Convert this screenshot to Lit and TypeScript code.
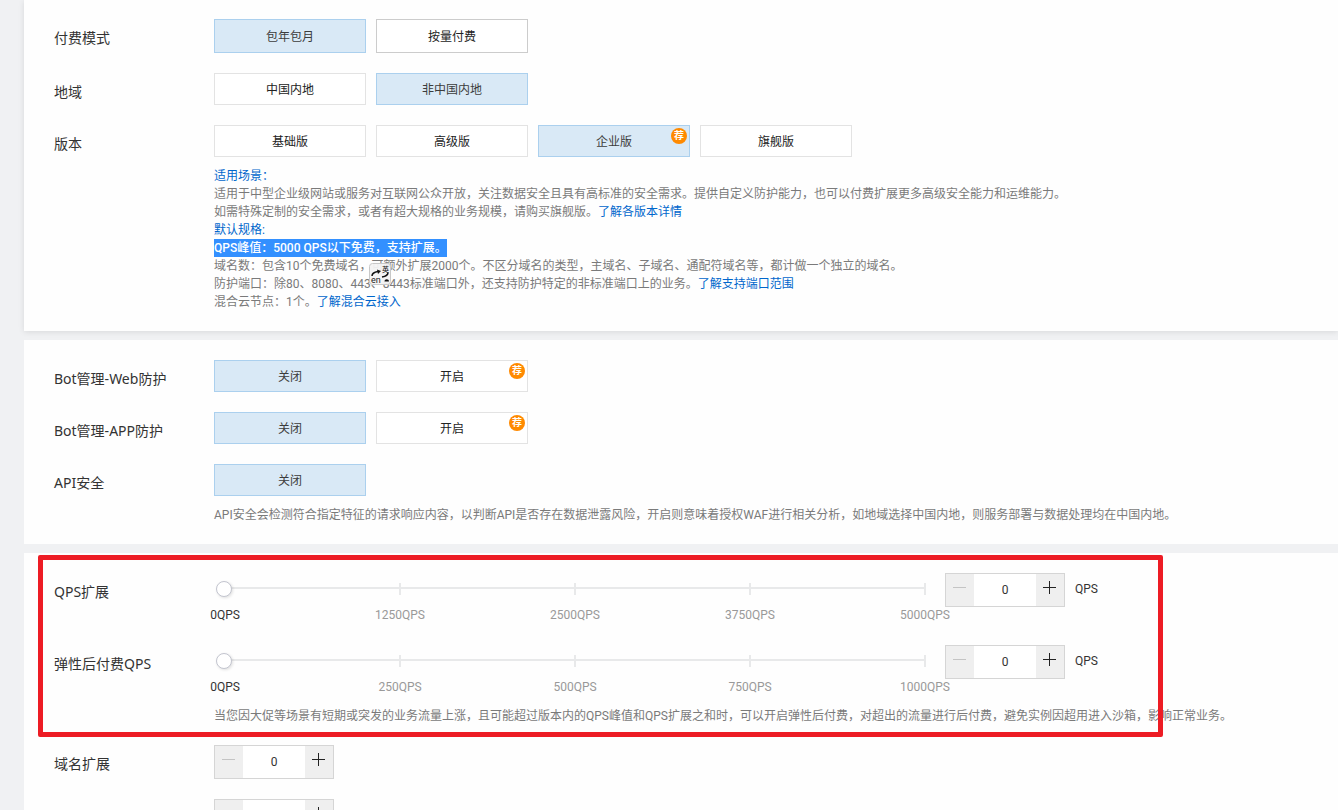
import { LitElement, html, css, svg, nothing } from "lit";
import { customElement, property } from "lit/decorators.js";

interface Option {
  text: string;
  selected?: boolean;
  recommended?: boolean;
}

const fontStack = css`Roboto, "Noto Sans CJK SC", sans-serif`;

@customElement("option-group")
class OptionGroup extends LitElement {
  @property() label = "";
  @property({ type: Boolean, reflect: true }) large = false;
  @property({ attribute: false }) options: Option[] = [];

  static styles = css`
    :host {
      display: block;
    }
    .group {
      display: flex;
      flex-wrap: wrap;
      gap: 10px;
    }
    .option {
      position: relative;
      box-sizing: border-box;
      width: 152px;
      height: 32px;
      padding: 2px 0 0;
      border: 1px solid #e3e3e3;
      background: #fff;
      color: #222;
      font: 12px/18px ${fontStack};
      cursor: pointer;
    }
    :host([large]) .option {
      height: 34px;
      border-color: #ccc;
    }
    .option.selected,
    :host([large]) .option.selected {
      border-color: #abd0ee;
      background: #d9e9f6;
      color: #3c3c3c;
    }
    .badge {
      position: absolute;
      top: 2px;
      right: 2px;
      width: 16px;
      height: 16px;
      border-radius: 50%;
      background: #ff8a00;
      color: #fff;
      font-size: 10px;
      font-weight: 700;
      line-height: 16px;
      text-align: center;
    }
  `;

  private pick(index: number) {
    this.options = this.options.map((o, i) => ({ ...o, selected: i === index }));
  }

  render() {
    return html`<div class="group" role="group" aria-label=${this.label}>
      ${this.options.map(
        (o, i) => html`<button
          type="button"
          class="option ${o.selected ? "selected" : ""}"
          aria-pressed=${o.selected ? "true" : "false"}
          @click=${() => this.pick(i)}
        >${o.text}${o.recommended ? html`<span class="badge">荐</span>` : nothing}</button>`
      )}
    </div>`;
  }
}

@customElement("number-stepper")
class NumberStepper extends LitElement {
  @property() label = "";
  @property({ type: Number }) value = 0;
  @property({ type: Number }) step = 1;

  static styles = css`
    :host {
      display: block;
    }
    .stepper {
      display: flex;
      box-sizing: border-box;
      width: 120px;
      height: 34px;
      border: 1px solid #d5d5d5;
      background: #fff;
    }
    .adjust {
      display: flex;
      align-items: center;
      justify-content: center;
      width: 28px;
      padding: 0 1px 5px 0;
      border: 0;
      background: #efefef;
      color: #222;
      cursor: pointer;
    }
    .adjust:disabled {
      color: #c4c4c4;
      cursor: default;
    }
    .value {
      flex: 1;
      min-width: 0;
      padding: 0;
      border: 0;
      outline: 0;
      background: none;
      color: #333;
      font: 12px/18px ${fontStack};
      text-align: center;
    }
  `;

  private change(delta: number) {
    this.value = Math.max(0, this.value + delta);
    this.dispatchEvent(new CustomEvent("value-change", { detail: this.value }));
  }

  private icon(plus: boolean) {
    return html`<svg width="13" height="13" viewBox="0 0 13 13" fill="none" stroke="currentColor" shape-rendering="crispEdges">
      <path d="M0 6.5h13" />${plus ? svg`<path d="M6.5 0v13" />` : nothing}
    </svg>`;
  }

  render() {
    return html`<div class="stepper">
      <button type="button" class="adjust" aria-label="减少" ?disabled=${this.value <= 0} @click=${() => this.change(-this.step)}>${this.icon(false)}</button>
      <input class="value" type="text" inputmode="numeric" aria-label=${this.label} .value=${String(this.value)}
        @change=${(e: Event) => this.change((Number((e.target as HTMLInputElement).value) || 0) - this.value)} />
      <button type="button" class="adjust" aria-label="增加" @click=${() => this.change(this.step)}>${this.icon(true)}</button>
    </div>`;
  }
}

@customElement("qps-slider")
class QpsSlider extends LitElement {
  @property() label = "";
  @property({ type: Number }) max = 1000;
  @property({ type: Number }) value = 0;

  static styles = css`
    :host {
      display: flex;
      min-height: 52px;
      color: #333;
      font: 12px/18px ${fontStack};
    }
    .slider {
      display: grid;
      flex: 0 1 731px;
      align-content: start;
      padding-top: 6px;
    }
    .track,
    .range {
      grid-area: 1 / 1;
    }
    .track {
      display: flex;
      justify-content: space-between;
      margin: 4px 20px 0 11px;
      background: linear-gradient(#e8e9ea, #e8e9ea) 0 4px / 100% 2px no-repeat;
    }
    .mark {
      display: flex;
      flex-direction: column;
      align-items: center;
      gap: 11px;
      width: 0;
      color: #999;
      white-space: nowrap;
    }
    .mark.active {
      color: #333;
    }
    .tick {
      width: 2px;
      height: 12px;
      background: #e8e9ea;
    }
    .range {
      appearance: none;
      height: 20px;
      margin: 0 12px 0 2px;
      background: none;
      cursor: pointer;
      z-index: 1;
    }
    .range::-webkit-slider-thumb {
      appearance: none;
      box-sizing: border-box;
      width: 16px;
      height: 16px;
      border: 1px solid #c3c5cf;
      border-radius: 50%;
      background: #fff;
      box-shadow: 1px 1px 3px rgba(0, 0, 0, 0.12);
    }
    .unit {
      padding: 7px 0 0 10px;
    }
  `;

  render() {
    const marks = [0, 1, 2, 3, 4].map((n) => (this.max / 4) * n);
    return html`
      <div class="slider">
        <div class="track">
          ${marks.map(
            (m) => html`<div class="mark ${m <= this.value ? "active" : ""}">
              <span class="tick"></span><span>${m}QPS</span>
            </div>`
          )}
        </div>
        <input class="range" type="range" min="0" max=${this.max} aria-label=${this.label} .value=${String(this.value)}
          @input=${(e: Event) => (this.value = Number((e.target as HTMLInputElement).value))} />
      </div>
      <number-stepper label=${this.label} .value=${this.value} .step=${this.max / 20}
        @value-change=${(e: CustomEvent) => (this.value = Math.min(this.max, e.detail))}></number-stepper>
      <span class="unit">QPS</span>
    `;
  }
}

@customElement("app-root")
class AppRoot extends LitElement {
  static styles = css`
    :host {
      display: block;
      box-sizing: border-box;
      height: 100vh;
      overflow: hidden;
      padding-left: 24px;
      background: #f0f1f3;
      color: #333;
      font: 12px/18px ${fontStack};
    }
    .page {
      display: flex;
      flex-direction: column;
      gap: 9px;
    }
    .panel,
    .highlighted {
      display: flex;
      flex-direction: column;
      gap: 20px;
    }
    .panel {
      padding: 20px 30px;
      background: #fefefe;
    }
    .panel.first {
      padding-top: 19px;
      box-shadow: 0 1px 6px rgba(0, 0, 0, 0.1);
    }
    .row {
      display: grid;
      grid-template-columns: 160px minmax(0, 1fr);
    }
    .name {
      padding-top: 8px;
      font-family: "Noto Sans", "Noto Sans CJK SC", sans-serif;
      font-size: 14px;
      line-height: 22px;
    }
    .note {
      position: relative;
      margin: 10px 0 0;
      color: #7a7a7a;
      white-space: nowrap;
    }
    .heading {
      color: #06c;
    }
    .selection {
      display: inline-block;
      background: #3390ff;
      color: #fff;
      font-weight: 500;
    }
    a {
      color: #06c;
      text-decoration: none;
    }
    .translate {
      position: absolute;
      top: 96px;
      left: 155px;
      width: 22px;
      height: 22px;
    }
    .highlighted {
      position: relative;
    }
    .frame {
      position: absolute;
      top: -18px;
      bottom: -12px;
      left: -16px;
      box-sizing: border-box;
      width: 1125px;
      border: 5px solid #ed1c24;
      border-radius: 2px;
      pointer-events: none;
      z-index: 2;
    }
  `;

  private options(name: string, options: Option[], note: unknown = nothing, large = false) {
    return html`<div class="row">
      <span class="name">${name}</span>
      <div><option-group label=${name} ?large=${large} .options=${options}></option-group>${note}</div>
    </div>`;
  }

  private translateIcon() {
    return html`<svg class="translate" viewBox="0 0 22 22" aria-hidden="true">
      <rect x="0.5" y="0.5" width="21" height="21" rx="3" fill="#f3f3f3" fill-opacity="0.94" stroke="#c8c8c8" />
      <path d="M3 13c0-3 3-4 6-4.500M19 9.500c0 3-3 4-6 4.500" fill="none" stroke="#111" stroke-width="1.500" />
      <path d="M8 6.500l4 1.500-3 3z" fill="#111" />
      <path d="M15.500 18.500c0-3 4.500-3 4.500 0z" fill="#111" />
      <text x="13" y="8.500" font-size="7" font-weight="500" fill="#222">英</text>
      <text x="2" y="19.500" font-size="9" fill="#222">en</text>
    </svg>`;
  }

  render() {
    return html`<main class="page">
      <section class="panel first">
        ${this.options("付费模式", [{ text: "包年包月", selected: true }, { text: "按量付费" }], nothing, true)}
        ${this.options("地域", [{ text: "中国内地" }, { text: "非中国内地", selected: true }])}
        ${this.options(
          "版本",
          [{ text: "基础版" }, { text: "高级版" }, { text: "企业版", selected: true, recommended: true }, { text: "旗舰版" }],
          html`<div class="note">
            <div class="heading">适用场景：</div>
            <div>适用于中型企业级网站或服务对互联网公众开放，关注数据安全且具有高标准的安全需求。提供自定义防护能力，也可以付费扩展更多高级安全能力和运维能力。</div>
            <div>如需特殊定制的安全需求，或者有超大规格的业务规模，请购买旗舰版。<a href="#">了解各版本详情</a></div>
            <div class="heading">默认规格:</div>
            <div class="selection">QPS峰值：5000 QPS以下免费，支持扩展。</div>
            <div>域名数：包含10个免费域名，可额外扩展2000个。不区分域名的类型，主域名、子域名、通配符域名等，都计做一个独立的域名。</div>
            <div>防护端口：除80、8080、443、8443标准端口外，还支持防护特定的非标准端口上的业务。<a href="#">了解支持端口范围</a></div>
            <div>混合云节点：1个。<a href="#">了解混合云接入</a></div>
            ${this.translateIcon()}
          </div>`
        )}
      </section>
      <section class="panel">
        ${this.options("Bot管理-Web防护", [{ text: "关闭", selected: true }, { text: "开启", recommended: true }])}
        ${this.options("Bot管理-APP防护", [{ text: "关闭", selected: true }, { text: "开启", recommended: true }])}
        ${this.options(
          "API安全",
          [{ text: "关闭", selected: true }],
          html`<p class="note">API安全会检测符合指定特征的请求响应内容，以判断API是否存在数据泄露风险，开启则意味着授权WAF进行相关分析，如地域选择中国内地，则服务部署与数据处理均在中国内地。</p>`
        )}
      </section>
      <section class="panel">
        <div class="highlighted">
          <div class="row">
            <span class="name">QPS扩展</span>
            <qps-slider label="QPS扩展" max="5000"></qps-slider>
          </div>
          <div class="row">
            <span class="name">弹性后付费QPS</span>
            <div>
              <qps-slider label="弹性后付费QPS" max="1000"></qps-slider>
              <p class="note">当您因大促等场景有短期或突发的业务流量上涨，且可能超过版本内的QPS峰值和QPS扩展之和时，可以开启弹性后付费，对超出的流量进行后付费，避免实例因超用进入沙箱，影响正常业务。</p>
            </div>
          </div>
          <div class="frame"></div>
        </div>
        <div class="row">
          <span class="name">域名扩展</span>
          <number-stepper label="域名扩展"></number-stepper>
        </div>
        <div class="row">
          <span class="name"></span>
          <number-stepper label="扩展数量"></number-stepper>
        </div>
      </section>
    </main>`;
  }
}
